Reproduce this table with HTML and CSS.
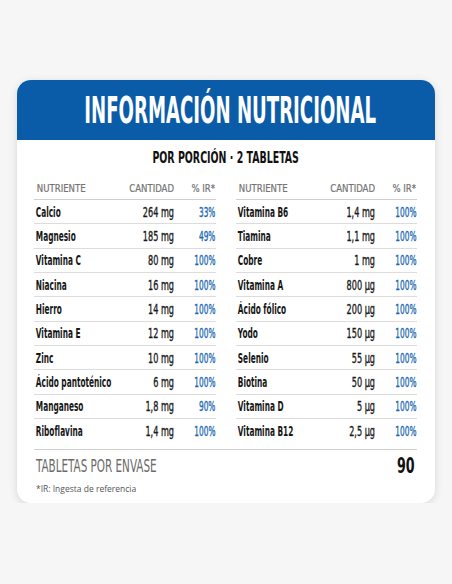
FILE: index.html
```html
<!DOCTYPE html>
<html lang="es">
<head>
  <meta charset="UTF-8">
  <meta name="viewport" content="width=device-width, initial-scale=1.0">
  <title>Información nutricional</title>
  <link rel="stylesheet" href="styles.css">
</head>
<body>

<div class="card">
  <div class="card-head">
    <h1><span>INFORMACIÓN NUTRICIONAL</span></h1>
  </div>

  <div class="card-body">
    <div class="serving"><span>POR PORCIÓN · 2 TABLETAS</span></div>

    <div class="tables">
      <!-- Columna izquierda -->
      <div class="tabla">
        <div class="fila cab"><span class="n">NUTRIENTE</span><span class="q">CANTIDAD</span><span class="p">% IR*</span></div>
        <div class="fila"><span class="n">Calcio</span><span class="q">264 mg</span><span class="p">33%</span></div>
        <div class="fila"><span class="n">Magnesio</span><span class="q">185 mg</span><span class="p">49%</span></div>
        <div class="fila"><span class="n">Vitamina C</span><span class="q">80 mg</span><span class="p">100%</span></div>
        <div class="fila"><span class="n">Niacina</span><span class="q">16 mg</span><span class="p">100%</span></div>
        <div class="fila"><span class="n">Hierro</span><span class="q">14 mg</span><span class="p">100%</span></div>
        <div class="fila"><span class="n">Vitamina E</span><span class="q">12 mg</span><span class="p">100%</span></div>
        <div class="fila"><span class="n">Zinc</span><span class="q">10 mg</span><span class="p">100%</span></div>
        <div class="fila"><span class="n">Ácido pantoténico</span><span class="q">6 mg</span><span class="p">100%</span></div>
        <div class="fila"><span class="n">Manganeso</span><span class="q">1,8 mg</span><span class="p">90%</span></div>
        <div class="fila"><span class="n">Riboflavina</span><span class="q">1,4 mg</span><span class="p">100%</span></div>
      </div>

      <!-- Columna derecha -->
      <div class="tabla">
        <div class="fila cab"><span class="n">NUTRIENTE</span><span class="q">CANTIDAD</span><span class="p">% IR*</span></div>
        <div class="fila"><span class="n">Vitamina B6</span><span class="q">1,4 mg</span><span class="p">100%</span></div>
        <div class="fila"><span class="n">Tiamina</span><span class="q">1,1 mg</span><span class="p">100%</span></div>
        <div class="fila"><span class="n">Cobre</span><span class="q">1 mg</span><span class="p">100%</span></div>
        <div class="fila"><span class="n">Vitamina A</span><span class="q">800 µg</span><span class="p">100%</span></div>
        <div class="fila"><span class="n">Ácido fólico</span><span class="q">200 µg</span><span class="p">100%</span></div>
        <div class="fila"><span class="n">Yodo</span><span class="q">150 µg</span><span class="p">100%</span></div>
        <div class="fila"><span class="n">Selenio</span><span class="q">55 µg</span><span class="p">100%</span></div>
        <div class="fila"><span class="n">Biotina</span><span class="q">50 µg</span><span class="p">100%</span></div>
        <div class="fila"><span class="n">Vitamina D</span><span class="q">5 µg</span><span class="p">100%</span></div>
        <div class="fila"><span class="n">Vitamina B12</span><span class="q">2,5 µg</span><span class="p">100%</span></div>
      </div>
    </div>

    <div class="envase">
      <span class="envase-txt">TABLETAS POR ENVASE</span>
      <span class="envase-num">90</span>
    </div>
    <p class="nota">*IR: Ingesta de referencia</p>
  </div>
</div>

</body>
</html>
```

FILE: styles.css
```css
body {
  margin: 0;
  background: #f6f6f6;
  font-family: 'DejaVu Sans Condensed', 'DejaVu Sans', sans-serif;
  color: #1b1b1b;
}
.card {
  margin: 80px 17px 0;
  width: 418px;
  background: #fff;
  border-radius: 14px;
  box-shadow: 0 2px 8px rgba(0,0,0,0.13);
  overflow: hidden;
}
.card-head {
  background: #0b5ca8;
  height: 60px; padding-left: 9px;
  display: flex; align-items: center; justify-content: center;
}
.card-head h1 {
  margin: 0; color: #fff; white-space: nowrap;
  font-size: 38px; font-weight: bold; line-height: 1;
}
.card-head h1 span { display: inline-block; transform: scaleX(0.53); }
.card-body { padding: 0 18px 8px 17px; }
.serving {
  margin-top: 10px; line-height: 16px; height: 16px;
  text-align: center; font-size: 15px; font-weight: bold; color: #111;
  white-space: nowrap;
}
.serving span { display: inline-block; transform: scaleX(0.7); }

.tables {
  display: grid; grid-template-columns: minmax(0, 1fr) minmax(0, 1fr); gap: 20px;
  margin-top: 11px;
}
.fila {
  display: grid; grid-template-columns: minmax(0, 1fr) 60px 42px;
  align-items: center;
  height: 24.33px; box-sizing: border-box;
  border-bottom: 1px solid #dcdcdc;
  font-size: 13.7px;
}
.fila:last-child { border-bottom: none; }
.fila span { display: block; white-space: nowrap; }
.fila .n { font-weight: bold; color: #161616; transform: scaleX(0.6); transform-origin: left center; padding-left: 3px; }
.fila .q { text-align: right; color: #1a1a1a; transform: scaleX(0.66); transform-origin: right center; -webkit-text-stroke: 0.35px currentColor; }
.fila .p { text-align: right; color: #1a68b3; transform: scaleX(0.6); transform-origin: right center; padding-right: 1px; -webkit-text-stroke: 0.35px currentColor; }
.fila.cab {
  height: 23px; border-bottom-color: #cfcfcf;
  font-size: 10px; color: #7a7a7a;
}
.fila.cab span { font-weight: normal; color: #737373; transform: scaleX(0.95); -webkit-text-stroke: 0.2px currentColor; }

.envase {
  margin-top: 6px;
  border-top: 1px solid #cfcfcf;
  height: 31px;
  display: flex; align-items: center; justify-content: space-between;
}
.envase-txt {
  display: inline-block; font-size: 17px; color: #6a6a6a; white-space: nowrap;
  transform: scaleX(0.68); transform-origin: left center; padding-left: 3px;
}
.envase-num {
  display: inline-block; font-size: 22px; font-weight: bold; color: #111;
  transform: scaleX(0.64); transform-origin: right center; padding-right: 3px;
}
.nota {
  margin: 2px 0 0 2px; line-height: 12px;
  font-family: 'Open Sans', 'Liberation Sans', sans-serif;
  font-size: 8.5px; color: #555;
}
```
